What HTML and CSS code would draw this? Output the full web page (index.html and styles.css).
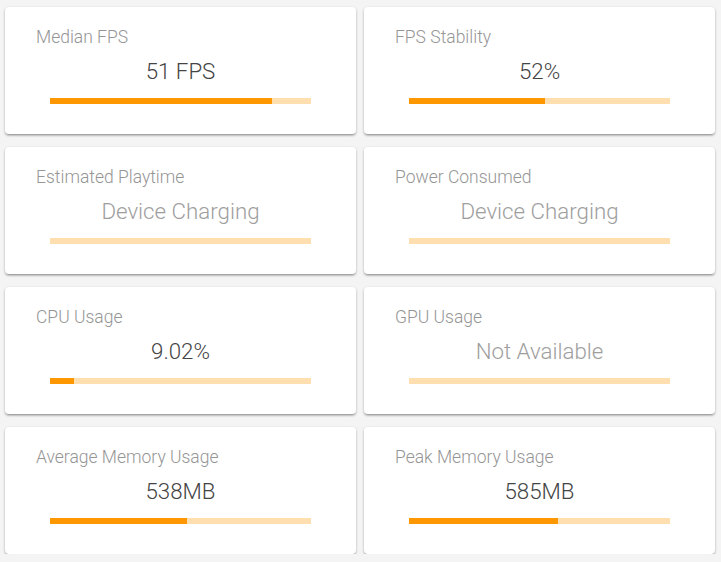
FILE: index.html
```html
<!DOCTYPE html>
<html lang="en">
<head>
  <meta charset="UTF-8"/>
  <meta name="viewport" content="width=device-width, initial-scale=1.0"/>
  <title>Session Stats</title>
  <link rel="stylesheet" href="styles.css">
</head>
<body>

  <div class="stats-grid">
    <div class="stat-card">
      <div class="stat-title">Median FPS</div>
      <div class="stat-value">51 FPS</div>
      <div class="stat-bar"><div class="stat-fill" style="width: 85%"></div></div>
    </div>
    <div class="stat-card">
      <div class="stat-title">FPS Stability</div>
      <div class="stat-value">52%</div>
      <div class="stat-bar"><div class="stat-fill" style="width: 52%"></div></div>
    </div>
    <div class="stat-card">
      <div class="stat-title">Estimated Playtime</div>
      <div class="stat-value muted">Device Charging</div>
      <div class="stat-bar"></div>
    </div>
    <div class="stat-card">
      <div class="stat-title">Power Consumed</div>
      <div class="stat-value muted">Device Charging</div>
      <div class="stat-bar"></div>
    </div>
    <div class="stat-card">
      <div class="stat-title">CPU Usage</div>
      <div class="stat-value">9.02%</div>
      <div class="stat-bar"><div class="stat-fill" style="width: 9.02%"></div></div>
    </div>
    <div class="stat-card">
      <div class="stat-title">GPU Usage</div>
      <div class="stat-value muted">Not Available</div>
      <div class="stat-bar"></div>
    </div>
    <div class="stat-card">
      <div class="stat-title">Average Memory Usage</div>
      <div class="stat-value">538MB</div>
      <div class="stat-bar"><div class="stat-fill" style="width: 52.5%"></div></div>
    </div>
    <div class="stat-card">
      <div class="stat-title">Peak Memory Usage</div>
      <div class="stat-value">585MB</div>
      <div class="stat-bar"><div class="stat-fill" style="width: 57.1%"></div></div>
    </div>
  </div>

</body>
</html>
```

FILE: styles.css
```css
body {
  margin: 0;
  padding: 7px 6px 0 5px;
  background: #f4f4f4;
  font-family: Roboto, 'Liberation Sans', sans-serif;
}

.stats-grid {
  display: grid;
  grid-template-columns: 1fr 1fr;
  column-gap: 8px;
  row-gap: 13px;
}

.stat-card {
  height: 127px;
  box-sizing: border-box;
  background: #fff;
  border-radius: 4px;
  box-shadow: 0 1px 3px rgba(0, 0, 0, 0.2), 0 2px 2px rgba(0, 0, 0, 0.14), 0 3px 1px -2px rgba(0, 0, 0, 0.12);
  padding: 18px 45px 0 31px;
}

.stat-title {
  font-size: 17.5px;
  font-weight: 300;
  line-height: 24px;
  color: #959595;
}

.stat-value {
  margin-top: 8px;
  padding-left: 14px;
  text-align: center;
  font-size: 22.3px;
  font-weight: 300;
  line-height: 28px;
  color: #444;
}

.stat-value.muted {
  color: #9e9e9e;
}

.stat-bar {
  margin: 13px 0 0 14px;
  height: 6px;
  background: #ffdfb0;
}

.stat-fill {
  height: 100%;
  background: #ff9800;
}
```
